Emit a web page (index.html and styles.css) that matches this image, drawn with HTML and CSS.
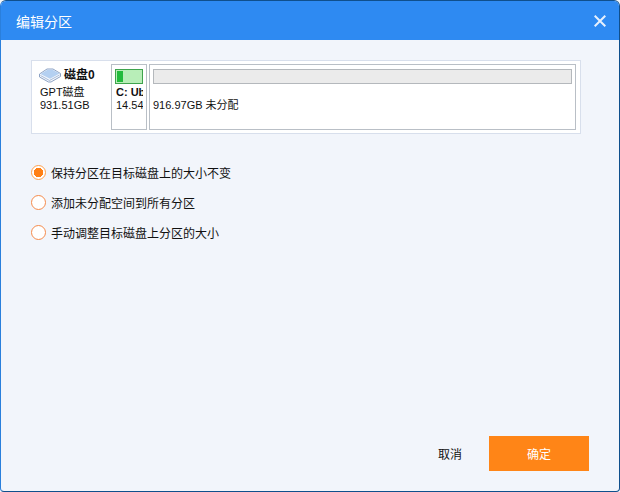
FILE: index.html
```html
<!DOCTYPE html>
<html lang="zh-CN">
<head>
  <meta charset="UTF-8" />
  <title>编辑分区</title>
  <link rel="stylesheet" href="styles.css">
</head>
<body>
  <div class="dialog">
    <div class="title-bar">
      <span class="title">编辑分区</span>
      <svg class="close" width="12" height="12" viewBox="0 0 12 12"><path d="M.7 .7L11.3 11.3M11.3 .7L.7 11.3" stroke="#e6f0fd" stroke-width="2" fill="none"/></svg>
    </div>
    <div class="content">
      <div class="disk-map">
        <div class="disk-info">
          <div class="disk-name">
            <svg class="disk-icon" width="22" height="15" viewBox="0 0 22 15">
              <path d="M.5 6L8 1H14L21.5 5.5V8.5L12 14H9.5L.5 9Z" fill="#f4f7fc" stroke="#8ea3c4" stroke-width="1"/>
              <path d="M1.5 6L8.5 1.8H13.5L20.5 5.6L11 10.8Z" fill="#b4d0f1"/>
              <path d="M1.5 7.5L10.5 12.5L20.5 7" stroke="#a9bcd8" stroke-width="1" fill="none"/>
            </svg>
            <b>磁盘0</b>
          </div>
          <div>GPT磁盘</div>
          <div>931.51GB</div>
        </div>
        <div class="partition small">
          <div class="bar used-bar"><div class="bar-fill"></div></div>
          <div class="part-text">
            <div class="part-name">C: Ub</div>
            <div>14.54</div>
          </div>
        </div>
        <div class="partition wide">
          <div class="bar free-bar"></div>
          <div class="part-text">
            <div class="part-name">&nbsp;</div>
            <div>916.97GB 未分配</div>
          </div>
        </div>
      </div>
      <div class="options">
        <label class="option"><span class="radio checked"></span>保持分区在目标磁盘上的大小不变</label>
        <label class="option"><span class="radio"></span>添加未分配空间到所有分区</label>
        <label class="option"><span class="radio"></span>手动调整目标磁盘上分区的大小</label>
      </div>
      <div class="footer">
        <button class="btn-cancel" type="button">取消</button>
        <button class="btn-ok" type="button">确定</button>
      </div>
    </div>
  </div>
</body>
</html>
```

FILE: styles.css
```css
html, body {
  margin: 0;
  padding: 0;
  height: 100%;
}

body {
  font-family: "Liberation Sans", "Noto Sans CJK SC", sans-serif;
  font-size: 12px;
  color: #111;
  background: #f4f7fb;
}

.dialog {
  box-sizing: border-box;
  width: 620px;
  height: 492px;
  display: flex;
  flex-direction: column;
  background: #f2f5fb;
  border: 1px solid #0f4f8c;
  border-left-color: #2a7fdc;
  border-radius: 6px 6px 4px 4px;
  overflow: hidden;
}

.title-bar {
  height: 39px;
  flex-shrink: 0;
  display: flex;
  align-items: center;
  justify-content: space-between;
  padding: 0 13px 0 15px;
  background: #2e8af2;
  color: #fff;
}

.title {
  font-size: 14px;
}

.content {
  flex: 1;
  display: flex;
  flex-direction: column;
  padding: 20px 30px 20px;
}

.disk-map {
  box-sizing: border-box;
  width: 550px;
  height: 74px;
  display: flex;
  gap: 2px;
  padding: 3px 4px 3px 0;
  background: #fff;
  border: 1px solid #d8dfec;
}

.disk-info {
  width: 77px;
  flex-shrink: 0;
  padding: 2px 0 0 8px;
  box-sizing: border-box;
  line-height: 13px;
  font-size: 11px;
}

.disk-name {
  display: flex;
  align-items: center;
  gap: 3px;
  height: 19px;
  margin-left: -1px;
  margin-bottom: 1px;
  font-size: 12px;
}

.partition {
  box-sizing: border-box;
  height: 66px;
  border: 1px solid #b9bfc6;
  padding: 4px 3px;
  font-size: 11px;
  line-height: 13px;
}

.small {
  width: 36px;
  flex-shrink: 0;
}

.small .part-text {
  padding-left: 1px;
}

.wide {
  flex: 1;
}

.part-text {
  overflow: hidden;
  white-space: nowrap;
}

.bar {
  box-sizing: border-box;
  height: 15px;
  margin-bottom: 2px;
}

.used-bar {
  border: 1px solid #3fa34d;
  background: #b8eeb8;
  padding: 1px;
}

.bar-fill {
  width: 6px;
  height: 100%;
  background: #22bb3c;
}

.free-bar {
  border: 1px solid #b4b8bc;
  background: #ebebeb;
}

.part-name {
  font-weight: bold;
}

.options {
  display: flex;
  flex-direction: column;
  gap: 10px;
  margin-top: 28px;
}

.option {
  display: flex;
  align-items: center;
  gap: 5px;
  height: 20px;
  font-size: 12px;
}

.radio {
  box-sizing: border-box;
  width: 15px;
  height: 15px;
  border: 1.5px solid #f58a4b;
  border-radius: 50%;
  background: #fff;
  flex-shrink: 0;
}

.radio.checked {
  border-color: #ffa04d;
  background: radial-gradient(circle, #ff7f14 0 4.5px, #fff 5px);
}

.footer {
  margin-top: auto;
  display: flex;
  justify-content: flex-end;
  align-items: center;
  gap: 27px;
}

.footer button {
  border: none;
  font-family: inherit;
  font-size: 12px;
  padding: 0;
}

.btn-cancel {
  background: none;
  color: #111;
}

.btn-ok {
  width: 100px;
  height: 35px;
  background: #ff8517;
  color: #fff;
}
```
